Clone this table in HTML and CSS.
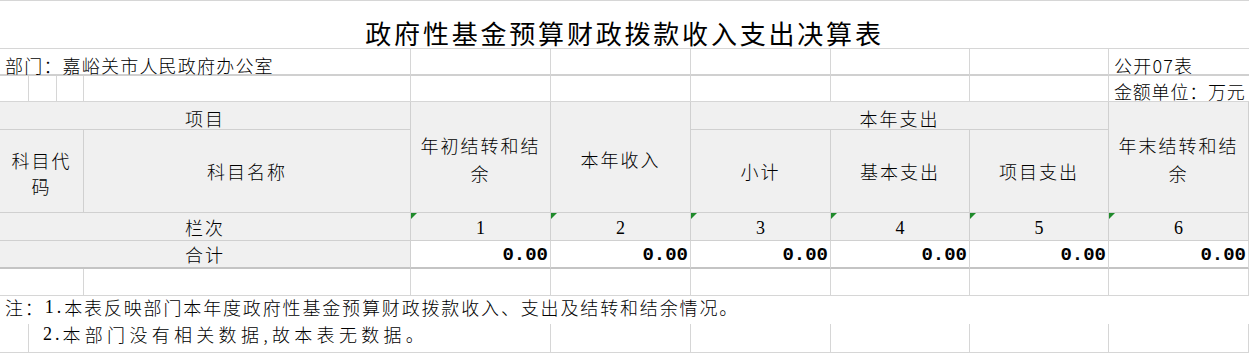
FILE: index.html
```html
<!DOCTYPE html>
<html lang="zh-CN">
<head>
<meta charset="utf-8">
<title>政府性基金预算财政拨款收入支出决算表</title>
<link rel="stylesheet" href="styles.css">
</head>
<body>
<div class="sheet">
  <div class="cell title s10">政府性基金预算财政拨款收入支出决算表</div>

  <div class="cell info left s4">部门：嘉峪关市人民政府办公室</div>
  <div class="cell info"></div>
  <div class="cell info"></div>
  <div class="cell info"></div>
  <div class="cell info"></div>
  <div class="cell info"></div>
  <div class="cell info left nr">公开07表</div>

  <div class="cell unit"></div>
  <div class="cell unit"></div>
  <div class="cell unit"></div>
  <div class="cell unit"></div>
  <div class="cell unit"></div>
  <div class="cell unit"></div>
  <div class="cell unit"></div>
  <div class="cell unit"></div>
  <div class="cell unit"></div>
  <div class="cell unit left nr">金额单位：万元</div>

  <div class="cell head h1 s4">项目</div>
  <div class="cell head tall r2">年初结转和结余</div>
  <div class="cell head tall r2">本年收入</div>
  <div class="cell head h1 s3">本年支出</div>
  <div class="cell head tall r2">年末结转和结余</div>

  <div class="cell head wrap code s3">科目代码</div>
  <div class="cell head">科目名称</div>
  <div class="cell head">小计</div>
  <div class="cell head">基本支出</div>
  <div class="cell head">项目支出</div>

  <div class="cell head s4">栏次</div>
  <div class="cell head flag num">1</div>
  <div class="cell head flag num">2</div>
  <div class="cell head flag num">3</div>
  <div class="cell head flag num">4</div>
  <div class="cell head flag num">5</div>
  <div class="cell head flag num">6</div>

  <div class="cell head total s4">合计</div>
  <div class="cell total amount">0.00</div>
  <div class="cell total amount">0.00</div>
  <div class="cell total amount">0.00</div>
  <div class="cell total amount">0.00</div>
  <div class="cell total amount">0.00</div>
  <div class="cell total amount">0.00</div>

  <div class="cell s3"></div>
  <div class="cell"></div>
  <div class="cell"></div>
  <div class="cell"></div>
  <div class="cell"></div>
  <div class="cell"></div>
  <div class="cell"></div>
  <div class="cell"></div>

  <div class="cell note plain s10">注：<span class="lat">1.</span>本表反映部门本年度政府性基金预算财政拨款收入、支出及结转和结余情况。</div>

  <div class="cell"></div>
  <div class="cell note note2 s4"><span class="lat">2.</span>本部门没有相关数据,故本表无数据。</div>
  <div class="cell"></div>
  <div class="cell"></div>
  <div class="cell"></div>
  <div class="cell"></div>
  <div class="cell"></div>
</div>
</body>
</html>
```
FILE: styles.css
```css
html, body {
  margin: 0;
  padding: 0;
  background: #ffffff;
}

.sheet {
  display: grid;
  grid-template-columns: 29px 28px 27px 327px 140px 140px 140px 139px 139px 140px;
  grid-template-rows: 48px 27px 26px 28px 83px 28px 28px 27px 28px 29px;
  width: 1249px;
  border-top: 1px solid #d6d6d6;
  font-family: "Noto Sans CJK SC", "Noto Sans", sans-serif;
  font-size: 18px;
  font-weight: 300;
  letter-spacing: 2px;
  color: #000000;
}

.cell {
  position: relative;
  display: flex;
  align-items: center;
  justify-content: center;
  text-align: center;
  border-right: 1px solid #d6d6d6;
  border-bottom: 1px solid #d6d6d6;
  line-height: 24px;
  white-space: nowrap;
  min-width: 0;
}

.s3 { grid-column: span 3; }
.s4 { grid-column: span 4; }
.s10 { grid-column: span 10; }
.r2 { grid-row: span 2; }

.title {
  border-right: none;
  align-items: flex-end;
  font-size: 26px;
  font-weight: 400;
  letter-spacing: 2.8px;
  line-height: 30px;
}

.left {
  justify-content: flex-start;
  padding-left: 5px;
}

.info {
  align-items: flex-end;
  line-height: 18px;
  letter-spacing: 1.2px;
  border-bottom: 2px solid #d0d0d0;
}

.unit {
  align-items: flex-end;
  line-height: 20px;
  letter-spacing: 0.8px;
}

.nr {
  border-right: none;
}

.head {
  background: #f0f0f0;
  border-color: #d0d0d0;
}

.h1 {
  align-items: flex-end;
  line-height: 22px;
}

.tall {
  white-space: normal;
  line-height: 28px;
  padding: 4px 1px 0;
}

.wrap {
  white-space: normal;
}

.code {
  line-height: 26px;
  padding: 4px 4px 0;
}

.num {
  font-family: "Liberation Serif", serif;
  font-weight: 400;
  letter-spacing: 0;
  padding-top: 2px;
}

.flag::before {
  content: "";
  position: absolute;
  left: 0;
  top: 0;
  width: 0;
  height: 0;
  border-top: 6px solid #1f8a2b;
  border-right: 6px solid transparent;
}

.total {
  border-bottom: 2px solid #c4c4c4;
}

.amount {
  justify-content: flex-end;
  padding-right: 2px;
  padding-top: 2px;
  font-family: "Liberation Mono", monospace;
  font-weight: 700;
  font-size: 19px;
  letter-spacing: 0;
}

.note {
  justify-content: flex-start;
  align-items: flex-start;
  line-height: 22px;
  padding-left: 5px;
  letter-spacing: 1.85px;
}

.plain {
  border: none;
}

.note2 {
  padding-left: 14px;
  line-height: 20px;
  letter-spacing: 4.3px;
}

.lat {
  font-family: "Liberation Serif", serif;
  font-weight: 400;
  letter-spacing: 3px;
}
```
